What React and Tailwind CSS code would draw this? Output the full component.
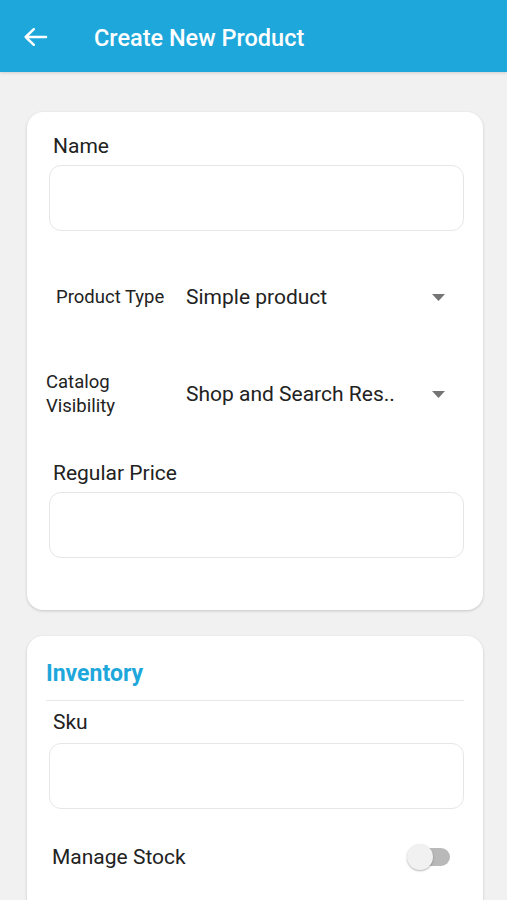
import React from "react";

function Field({ label, gap = "mt-[7px]" }) {
  return (
    <div className="flex flex-col">
      <div className="pl-[26px] text-[21px] leading-[24px] text-[#222]">{label}</div>
      <div className={`${gap} ml-[22px] mr-[19px] h-[66px] rounded-[12px] border border-[#e6e6e6] bg-white`} />
    </div>
  );
}

function Caret() {
  return (
    <svg width="13" height="7" viewBox="0 0 13 7" className="shrink-0">
      <path d="M0 0 L13 0 L6.5 7 Z" fill="#757575" />
    </svg>
  );
}

export default function App() {
  return (
    <div className="w-[507px] h-[900px] overflow-hidden bg-[#f1f1f1]" style={{ fontFamily: "Roboto, 'Noto Sans', sans-serif" }}>
      <div className="h-[72px] bg-[#1ea7db] flex items-center shadow-[0_1px_3px_rgba(0,0,0,0.15)]">
        <svg width="28" height="28" viewBox="0 0 24 24" className="ml-[21px] mt-[2px]">
          <path d="M21.5 12H4M11 5.3L4 12l7 6.7" stroke="white" strokeWidth="2.1" fill="none" strokeLinecap="round" strokeLinejoin="round" />
        </svg>
        <div className="ml-[45px] mt-[4px] text-white text-[23.5px] font-medium leading-[28px]">Create New Product</div>
      </div>

      <div className="pl-[27px] pr-[24px] pt-[40px] flex flex-col gap-[26px]">
        <div className="bg-white rounded-[16px] shadow-[0_1px_3px_rgba(0,0,0,0.18)] pt-[22px] pb-[52px]">
          <Field label="Name" />
          <div className="mt-[54px] flex items-center h-[24px] pl-[29px] pr-[38px]">
            <div className="w-[130px] text-[18.5px] leading-[24px] text-[#222]">Product Type</div>
            <div className="flex-1 text-[21px] leading-[24px] text-[#222]">Simple product</div>
            <Caret />
          </div>
          <div className="mt-[61px] flex items-center pl-[19px] pr-[38px]">
            <div className="w-[140px] text-[18.5px] leading-[24px] text-[#222]">
              Catalog<br />Visibility
            </div>
            <div className="flex-1 text-[21px] leading-[24px] text-[#222]">Shop and Search Res..</div>
            <Caret />
          </div>
          <div className="mt-[43px]">
            <Field label="Regular Price" />
          </div>
        </div>

        <div className="bg-white rounded-[16px] shadow-[0_1px_3px_rgba(0,0,0,0.18)] pt-[24px] h-[400px]">
          <div className="px-[19px] text-[23px] font-bold text-[#1ea7db] leading-[28px]">Inventory</div>
          <div className="ml-[19px] mr-[19px] mt-[12px] border-t border-[#e8e8e8]" />
          <div className="mt-[9px]">
            <Field label="Sku" gap="mt-[9px]" />
          </div>
          <div className="mt-[35px] flex items-center justify-between pl-[25px] pr-[33px]">
            <div className="text-[21px] leading-[24px] text-[#222]">Manage Stock</div>
            <div className="relative w-[43px] h-[26px] flex items-center">
              <div className="absolute left-[13px] w-[30px] h-[18px] rounded-full bg-[#b9b9b9]" />
              <div className="absolute left-0 w-[26px] h-[26px] rounded-full bg-[#f1f1f1] shadow-[0_1px_2px_rgba(0,0,0,0.3)]" />
            </div>
          </div>
        </div>
      </div>
    </div>
  );
}
